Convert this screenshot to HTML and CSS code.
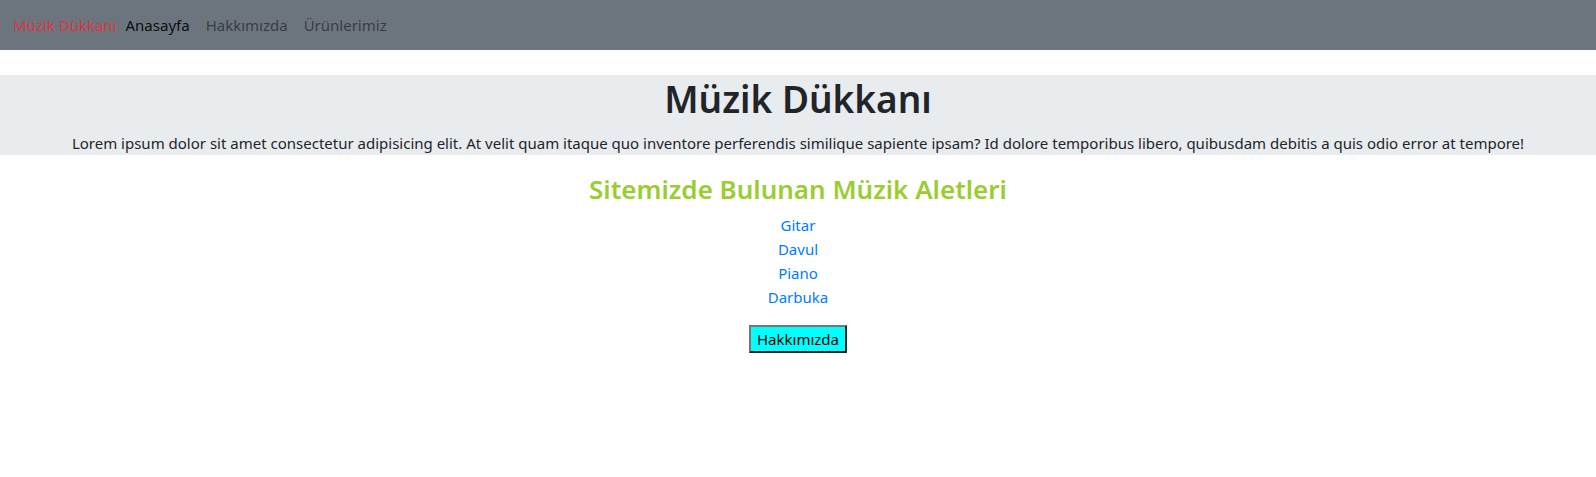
FILE: index.html
```html
<!DOCTYPE html>
<html lang="tr">
<head>
<meta charset="utf-8">
<title>Müzik Dükkanı</title>
<link rel="stylesheet" href="styles.css">
</head>
<body>
<nav class="navbar">
  <a class="brand" href="#">Müzik Dükkanı</a>
  <ul class="nav-links">
    <li><a class="nav-link active" href="#">Anasayfa</a></li>
    <li><a class="nav-link" href="#">Hakkımızda</a></li>
    <li><a class="nav-link" href="#">Ürünlerimiz</a></li>
  </ul>
</nav>
<header class="jumbo">
  <h1 class="jumbo-title">Müzik Dükkanı</h1>
  <p class="jumbo-text">Lorem ipsum dolor sit amet consectetur adipisicing elit. At velit quam itaque quo inventore perferendis similique sapiente ipsam? Id dolore temporibus libero, quibusdam debitis a quis odio error at tempore!</p>
</header>
<main class="content">
  <h2 class="section-title">Sitemizde Bulunan Müzik Aletleri</h2>
  <ul class="instruments">
    <li><a href="#">Gitar</a></li>
    <li><a href="#">Davul</a></li>
    <li><a href="#">Piano</a></li>
    <li><a href="#">Darbuka</a></li>
  </ul>
  <button class="about-btn" type="button">Hakkımızda</button>
</main>
</body>
</html>
```
FILE: styles.css
```css
* { box-sizing: border-box; }
body {
  margin: 0;
  font-family: "Noto Sans", "Open Sans", sans-serif;
  font-size: 15px;
  line-height: 24px;
  color: #212529;
  background: #fff;
}
a { text-decoration: none; }
.navbar {
  height: 50px;
  background: #6c757d;
  display: flex;
  align-items: center;
  padding: 0 13px;
}
.brand {
  color: #dc3545;
  margin-right: 1px;
}
.nav-links {
  display: flex;
  list-style: none;
  margin: 0;
  padding: 0;
}
.nav-link {
  display: block;
  padding: 0 8px;
  color: rgba(0,0,0,.5);
}
.nav-link.active { color: rgba(0,0,0,.9); }
.jumbo {
  margin-top: 25px;
  background: #e9ecef;
  text-align: center;
}
.jumbo-title {
  margin: 0 0 8px;
  font-size: 37px;
  line-height: 48px;
  font-weight: 600;
}
.jumbo-text { margin: 0; }
.content {
  display: flex;
  flex-direction: column;
  align-items: center;
}
.section-title {
  margin: 17px 0 7px;
  font-size: 26px;
  line-height: 34px;
  font-weight: 600;
  color: yellowgreen;
}
.instruments {
  list-style: none;
  margin: 0 0 16px;
  padding: 0;
  text-align: center;
}
.instruments a { color: #007bff; }
.about-btn {
  font: inherit;
  line-height: 22px;
  color: #000;
  background: #00ffff;
  border: 2px outset #767676;
  padding: 1px 6px;
  height: 28px;
}
```
